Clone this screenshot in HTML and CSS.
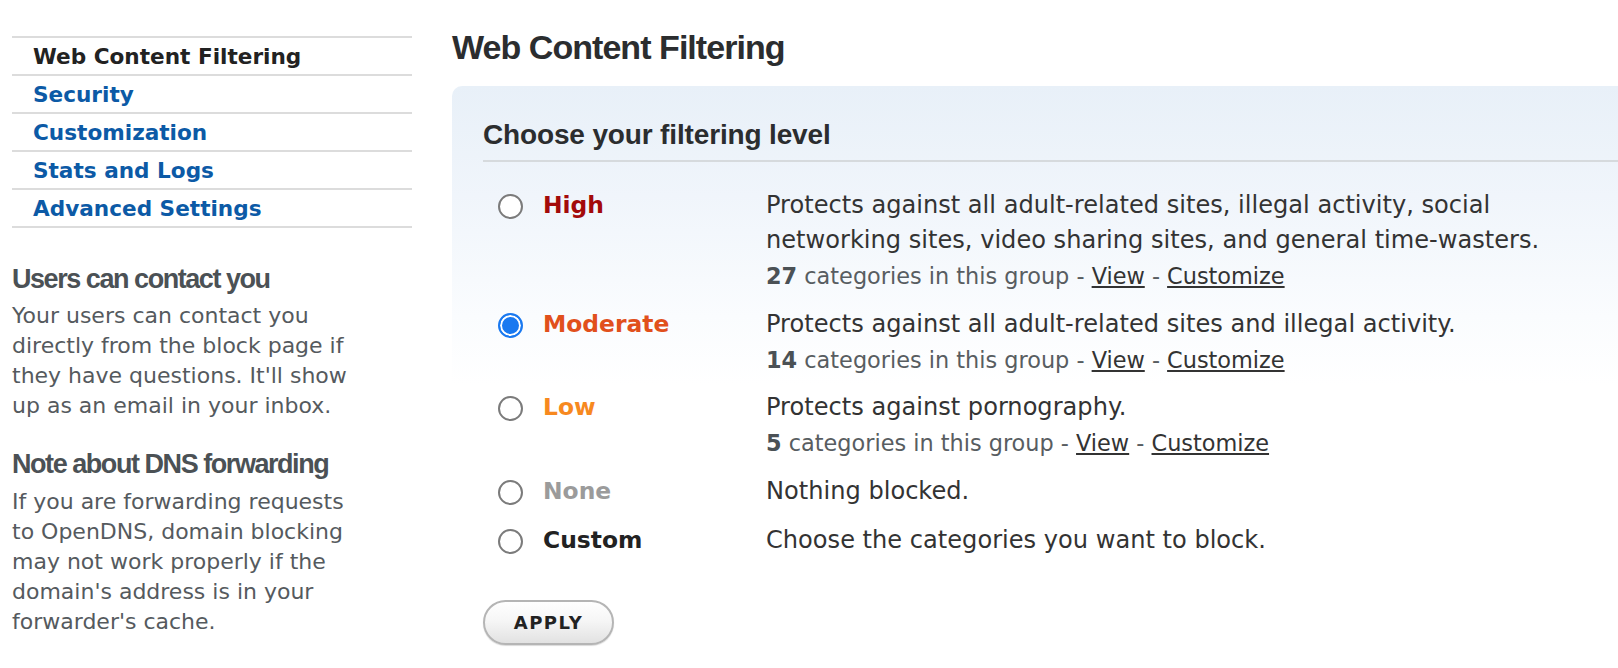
FILE: index.html
```html
<!DOCTYPE html>
<html lang="en">
<head>
<meta charset="utf-8">
<title>Web Content Filtering</title>
<link rel="stylesheet" href="styles.css">
</head>
<body>
<div class="page">
  <aside class="sidebar">
    <ul class="nav">
      <li class="nav-item current">Web Content Filtering</li>
      <li class="nav-item"><a href="#">Security</a></li>
      <li class="nav-item"><a href="#">Customization</a></li>
      <li class="nav-item"><a href="#">Stats and Logs</a></li>
      <li class="nav-item"><a href="#">Advanced Settings</a></li>
    </ul>
    <h3 class="side-title first">Users can contact you</h3>
    <p class="side-text">Your users can contact you directly from the block page if they have questions. It'll show up as an email in your inbox.</p>
    <h3 class="side-title">Note about DNS forwarding</h3>
    <p class="side-text">If you are forwarding requests to OpenDNS, domain blocking may not work properly if the domain's address is in your forwarder's cache.</p>
  </aside>
  <main class="main">
    <h1 class="page-title">Web Content Filtering</h1>
    <section class="panel">
      <h2 class="panel-title">Choose your filtering level</h2>
      <div class="levels">
        <label class="level">
          <span class="radio"></span>
          <span class="level-name high">High</span>
          <span class="level-desc">
            <span class="desc">Protects against all adult-related sites, illegal activity, social networking sites, video sharing sites, and general time-wasters.</span>
            <span class="sub"><b>27</b> categories in this group - <a href="#">View</a> - <a href="#">Customize</a></span>
          </span>
        </label>
        <label class="level">
          <span class="radio checked"></span>
          <span class="level-name moderate">Moderate</span>
          <span class="level-desc">
            <span class="desc">Protects against all adult-related sites and illegal activity.</span>
            <span class="sub"><b>14</b> categories in this group - <a href="#">View</a> - <a href="#">Customize</a></span>
          </span>
        </label>
        <label class="level">
          <span class="radio"></span>
          <span class="level-name low">Low</span>
          <span class="level-desc">
            <span class="desc">Protects against pornography.</span>
            <span class="sub"><b>5</b> categories in this group - <a href="#">View</a> - <a href="#">Customize</a></span>
          </span>
        </label>
        <label class="level">
          <span class="radio"></span>
          <span class="level-name none">None</span>
          <span class="level-desc">
            <span class="desc">Nothing blocked.</span>
          </span>
        </label>
        <label class="level last">
          <span class="radio"></span>
          <span class="level-name custom">Custom</span>
          <span class="level-desc">
            <span class="desc">Choose the categories you want to block.</span>
          </span>
        </label>
      </div>
      <button class="apply" type="button">APPLY</button>
    </section>
  </main>
</div>
</body>
</html>
```

FILE: styles.css
```css
html, body {
  margin: 0;
  padding: 0;
  background: #fff;
  overflow: hidden;
}

body {
  font-family: "DejaVu Sans", Verdana, sans-serif;
  color: #333;
}

.page {
  display: flex;
  gap: 40px;
  padding-left: 12px;
}

/* ---------- sidebar ---------- */
.sidebar {
  width: 400px;
  flex: none;
  padding-top: 36px;
}

.nav {
  list-style: none;
  margin: 0;
  padding: 0;
  border-top: 2px solid #dcdcdc;
}

.nav-item {
  height: 36px;
  line-height: 37px;
  padding-left: 21px;
  border-bottom: 2px solid #dcdcdc;
  font-size: 21.6px;
  font-weight: bold;
  color: #222;
  white-space: nowrap;
}

.nav-item a {
  color: #0c5aa6;
  text-decoration: none;
}

.side-title {
  margin: 26px 0 5px;
  font-family: "Liberation Sans", Arial, sans-serif;
  font-size: 27px;
  line-height: 34px;
  font-weight: bold;
  letter-spacing: -1.45px;
  color: #4b5155;
}

.side-title.first {
  margin-top: 34px;
}

.side-text {
  max-width: 355px;
  margin: 0;
  font-size: 22px;
  line-height: 30px;
  color: #555a5e;
}

.side-text + .side-title + .side-text {
  margin-top: 6px;
}

/* ---------- main ---------- */
.main {
  flex: 1;
  min-width: 0;
  padding-top: 27px;
}

.page-title {
  margin: 0 0 19px;
  font-family: "Liberation Sans", Arial, sans-serif;
  font-size: 34px;
  line-height: 40px;
  font-weight: bold;
  letter-spacing: -0.95px;
  color: #2b2d2f;
}

.panel {
  padding: 32px 0 40px 31px;
  border-radius: 10px 0 0 0;
  background: linear-gradient(to bottom, #e8f0f8 0, #f0f5fb 110px, #fafcfe 230px, #fff 300px);
}

.panel-title {
  margin: 0;
  padding-bottom: 8px;
  border-bottom: 2px solid #d6dadd;
  font-family: "Liberation Sans", Arial, sans-serif;
  font-size: 28px;
  line-height: 34px;
  font-weight: bold;
  letter-spacing: -0.15px;
  color: #2b2d2f;
}

.levels {
  display: flex;
  flex-direction: column;
  gap: 12.5px;
  margin-top: 26px;
  padding-left: 15px;
}

.level {
  display: grid;
  grid-template-columns: 45px 223px 820px;
  align-items: start;
}

.level.last {
  margin-top: 2px;
}

.radio {
  box-sizing: border-box;
  width: 25px;
  height: 25px;
  margin-top: 6px;
  border: 2px solid #7b7b7b;
  border-radius: 50%;
  background: #fff;
}

.radio.checked {
  border-color: #1a79f0;
  background: #1a79f0;
  box-shadow: inset 0 0 0 2px #fff;
}

.level-name {
  font-size: 23.4px;
  line-height: 35px;
  font-weight: bold;
}

.level-name.high { color: #a30a0a; }
.level-name.moderate { color: #e1501c; }
.level-name.low { color: #f7891f; }
.level-name.none { color: #9b9b9b; }
.level-name.custom { color: #222; }

.level-desc {
  display: flex;
  flex-direction: column;
}

.desc {
  font-size: 24.1px;
  line-height: 35px;
  color: #333;
}

.sub {
  font-size: 22.4px;
  line-height: 36px;
  color: #585d61;
}

.sub b {
  color: #4b5155;
}

.sub a {
  color: #333;
  text-decoration: underline;
}

.apply {
  display: block;
  margin-top: 42px;
  width: 131px;
  height: 45px;
  padding: 0;
  border: 2px solid #b5b5b5;
  border-radius: 23px;
  background: linear-gradient(to bottom, #ffffff 0, #f6f6f6 45%, #e2e2e2 100%);
  box-shadow: 0 1px 1px rgba(0, 0, 0, 0.15);
  font-family: "DejaVu Sans", Verdana, sans-serif;
  font-size: 18px;
  font-weight: bold;
  letter-spacing: 1.5px;
  color: #222;
}
```
